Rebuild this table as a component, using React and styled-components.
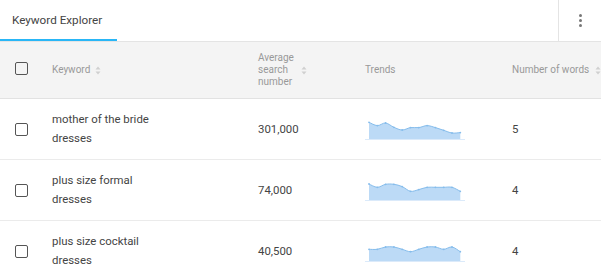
import React from "react";
import styled, { createGlobalStyle } from "styled-components";

const GlobalStyle = createGlobalStyle`
  html, body {
    margin: 0;
    padding: 0;
    background: #fff;
  }
  body {
    font-family: Roboto, "Liberation Sans", Arial, sans-serif;
  }
`;

const rows = [
  {
    keyword: ["mother of the bride", "dresses"],
    volume: "301,000",
    words: 5,
    trend: [3.3, 6.6, 4, 8.3, 11, 8.6, 8.6, 6.6, 8.6, 11.3, 14, 13.6],
  },
  {
    keyword: ["plus size formal", "dresses"],
    volume: "74,000",
    words: 4,
    trend: [4, 7.3, 4.3, 4.3, 6.6, 11.3, 9.6, 7.3, 7.3, 7.3, 7.3, 11.3],
  },
  {
    keyword: ["plus size cocktail", "dresses"],
    volume: "40,500",
    words: 4,
    trend: [8.3, 8.3, 6, 6, 8.3, 10.7, 8.3, 6, 6, 8.3, 6, 10.7],
  },
];

const COLS = "52px 206px 107px 147px 1fr";

const Panel = styled.div`
  width: 601px;
  height: 280px;
  overflow: hidden;
  background: #fff;
`;

const TabBar = styled.div`
  display: flex;
  height: 41px;
  border-bottom: 1px solid #e4e4e4;
`;

const Tab = styled.div`
  width: 117px;
  box-sizing: border-box;
  padding-left: 12px;
  display: flex;
  align-items: center;
  font-size: 11.7px;
  color: #444;
  border-bottom: 2px solid ${(p) => (p.active ? "#29b6f6" : "transparent")};
`;

const Spacer = styled.div`
  flex: 1;
`;

const MenuCell = styled.div`
  width: 42px;
  border-left: 1px solid #e4e4e4;
  display: flex;
  flex-direction: column;
  align-items: center;
  justify-content: center;
  gap: 2px;
`;

const Dot = styled.span`
  width: 3px;
  height: 3px;
  border-radius: 50%;
  background: #777;
`;

const Row = styled.div`
  display: grid;
  grid-template-columns: ${COLS};
  align-items: center;
  height: ${(p) => (p.head ? "56px" : "60px")};
  background: ${(p) => (p.head ? "#f4f4f4" : "#fff")};
  border-bottom: ${(p) => (p.head ? "1px solid #e2e2e2" : "1px solid #ebebeb")};
  color: ${(p) => (p.head ? "#999" : "#444")};
  font-size: ${(p) => (p.head ? "10px" : "11.4px")};
  line-height: ${(p) => (p.head ? "12px" : "19px")};
`;

const Cell = styled.div`
  display: flex;
  align-items: center;
  white-space: nowrap;
`;

const CheckCell = styled(Cell)`
  padding-left: 15px;
  padding-bottom: ${(p) => (p.head ? "3px" : "0")};
`;

const Box = styled.span`
  width: 13px;
  height: 13px;
  box-sizing: border-box;
  border: 1.6px solid #555;
  border-radius: 2px;
`;

const HeadLabel = styled.span`
  display: inline-block;
  white-space: normal;
  max-width: 40px;
`;

const SortIcon = styled.svg`
  margin-left: ${(p) => p.gap || 4}px;
  flex: none;
`;

const Sort = ({ gap }) => (
  <SortIcon gap={gap} width="6" height="9" viewBox="0 0 6 9">
    <path d="M3 0.5 L5.5 3.5 H0.5 Z" fill="#d0d0d0" />
    <path d="M3 8.5 L5.5 5.5 H0.5 Z" fill="#d0d0d0" />
  </SortIcon>
);

const Keyword = styled.div`
  display: flex;
  flex-direction: column;
`;

const TrendSvg = styled.svg`
  display: block;
  margin-top: 2px;
`;

function smoothPath(pts) {
  let d = `M${pts[0][0]},${pts[0][1]}`;
  for (let i = 0; i < pts.length - 1; i++) {
    const p0 = pts[i - 1] || pts[i];
    const p1 = pts[i];
    const p2 = pts[i + 1];
    const p3 = pts[i + 2] || p2;
    const c1x = p1[0] + (p2[0] - p0[0]) / 6;
    const c1y = p1[1] + (p2[1] - p0[1]) / 6;
    const c2x = p2[0] - (p3[0] - p1[0]) / 6;
    const c2y = p2[1] - (p3[1] - p1[1]) / 6;
    d += ` C${c1x.toFixed(2)},${c1y.toFixed(2)} ${c2x.toFixed(2)},${c2y.toFixed(2)} ${p2[0].toFixed(2)},${p2[1]}`;
  }
  return d;
}

const Trend = ({ data }) => {
  const pts = data.map((y, i) => [4 + i * 8.3, y]);
  const line = smoothPath(pts);
  const last = pts[pts.length - 1];
  const area = `${line} L${last[0].toFixed(2)},20 L4,20 Z`;
  return (
    <TrendSvg width="100" height="22" viewBox="0 0 100 22">
      <path d={area} fill="#bcdaf6" />
      <path d={line} fill="none" stroke="#86bdec" strokeWidth="1" />
      {pts.map((p, i) => (
        <circle key={i} cx={p[0]} cy={p[1]} r="0.9" fill="#86bdec" />
      ))}
      <line x1="0" y1="20.5" x2="100" y2="20.5" stroke="#dbeafa" strokeWidth="1" />
    </TrendSvg>
  );
};

export default function App() {
  return (
    <Panel>
      <GlobalStyle />
      <TabBar>
        <Tab active>Keyword Explorer</Tab>
        <Spacer />
        <MenuCell>
          <Dot />
          <Dot />
          <Dot />
        </MenuCell>
      </TabBar>

      <Row head>
        <CheckCell head>
          <Box />
        </CheckCell>
        <Cell>
          Keyword
          <Sort gap={5} />
        </Cell>
        <Cell>
          <HeadLabel>Average search number</HeadLabel>
          <Sort gap={3} />
        </Cell>
        <Cell>Trends</Cell>
        <Cell>
          Number of words
          <Sort gap={6} />
        </Cell>
      </Row>

      {rows.map((r) => (
        <Row key={r.keyword.join(" ")}>
          <CheckCell>
            <Box />
          </CheckCell>
          <Keyword>
            {r.keyword.map((l) => (
              <span key={l}>{l}</span>
            ))}
          </Keyword>
          <Cell>{r.volume}</Cell>
          <Cell>
            <Trend data={r.trend} />
          </Cell>
          <Cell>{r.words}</Cell>
        </Row>
      ))}
    </Panel>
  );
}
